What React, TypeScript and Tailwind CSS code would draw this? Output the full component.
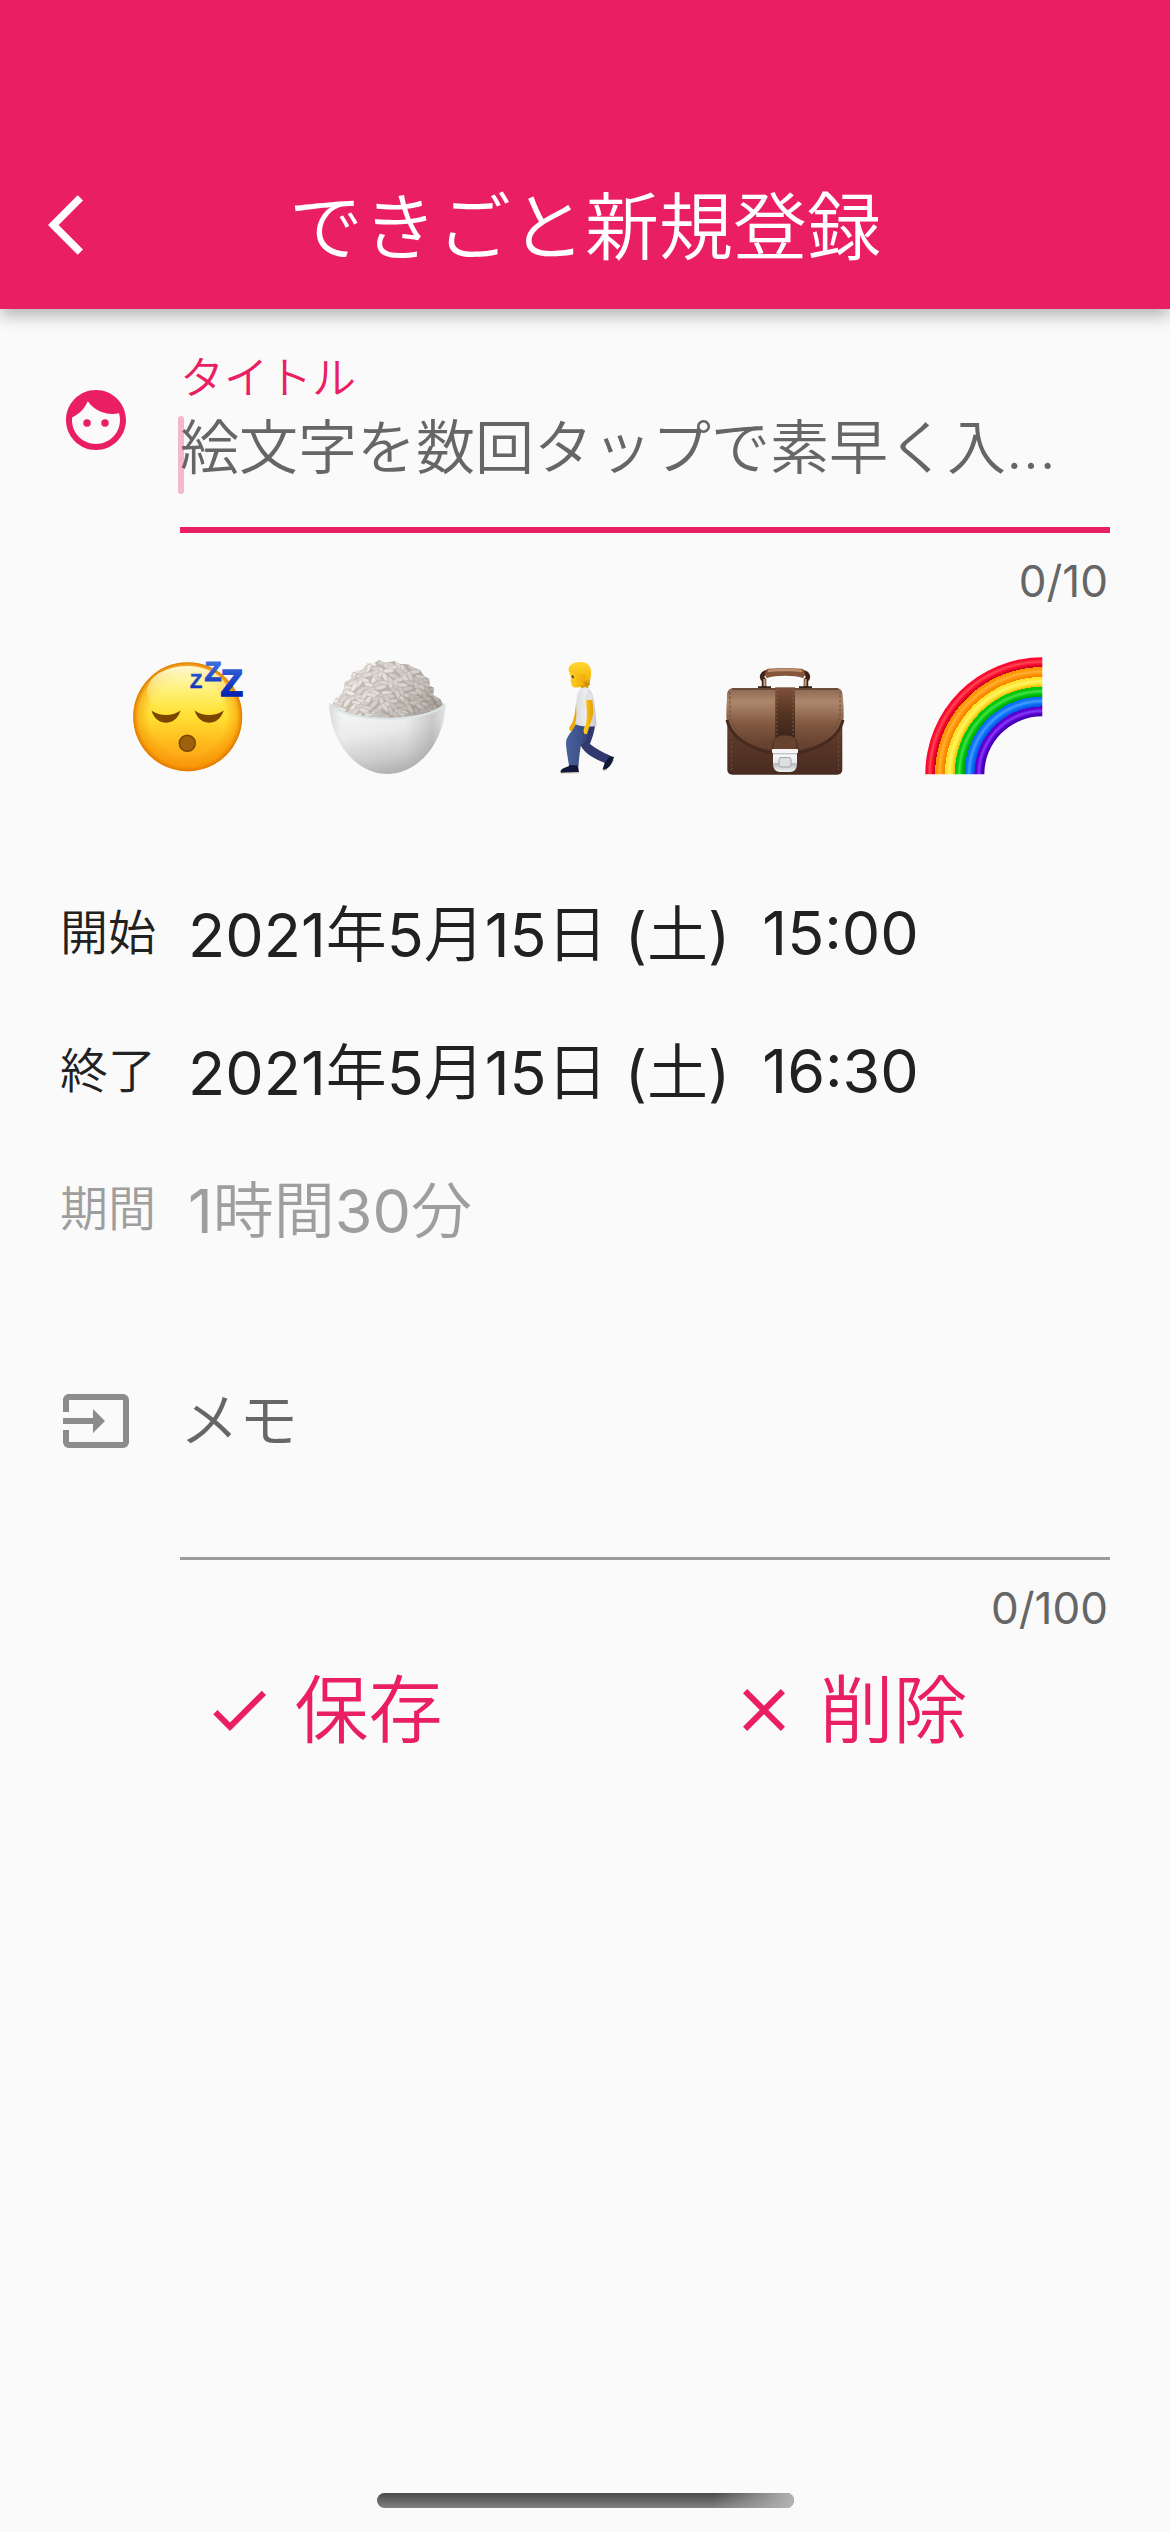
import { ReactNode, useState } from 'react';
import { MdCheck, MdClose, MdFace, MdInput } from 'react-icons/md';

const TITLE_MAX = 10;
const MEMO_MAX = 100;

function SleepingIcon() {
  return (
    <svg viewBox="0 0 120 120" className="size-[120px] overflow-visible" aria-hidden="true">
      <defs>
        <radialGradient id="sleep-edge" cx="0.5" cy="0.5" r="0.5">
          <stop offset="0.7" stopColor="#f08c00" stopOpacity="0" />
          <stop offset="0.9" stopColor="#f59300" stopOpacity="0.5" />
          <stop offset="1" stopColor="#e07800" />
        </radialGradient>
        <linearGradient id="sleep-face" x1="0" y1="0" x2="0" y2="1">
          <stop offset="0" stopColor="#fff37a" />
          <stop offset="0.5" stopColor="#ffe033" />
          <stop offset="0.75" stopColor="#ffb81c" />
          <stop offset="1" stopColor="#fb9a10" />
        </linearGradient>
        <linearGradient id="sleep-shine" x1="0" y1="0" x2="0" y2="1">
          <stop offset="0" stopColor="#fffde0" stopOpacity="0.95" />
          <stop offset="1" stopColor="#fff25a" stopOpacity="0" />
        </linearGradient>
        <linearGradient id="sleep-z" gradientUnits="userSpaceOnUse" x1="0" y1="4" x2="0" y2="38">
          <stop offset="0" stopColor="#3f70e0" />
          <stop offset="1" stopColor="#0524b0" />
        </linearGradient>
      </defs>
      <circle cx="60.7" cy="59.7" r="54.5" fill="url(#sleep-face)" />
      <circle cx="60.7" cy="59.7" r="54.5" fill="url(#sleep-edge)" />
      <ellipse cx="60" cy="34" rx="40" ry="25" fill="url(#sleep-shine)" />
      <path d="M24.5 53.5C33 59.500 45 59.500 53.500 53.500C51 62 45 65.800 39 65.800S27 62 24.500 53.500Z" fill="#7c4600" />
      <path d="M67.700 53.500C76 59.500 88 59.500 96.700 53.500C94 62 88 65.800 82.200 65.800S70 62 67.700 53.500Z" fill="#7c4600" />
      <circle cx="60.300" cy="86.300" r="8" fill="#9d600b" stroke="#7c4600" strokeWidth="1.500" />
      <g fontFamily="Liberation Sans, sans-serif" fontWeight="700" fill="url(#sleep-z)" stroke="url(#sleep-z)">
        <text x="63" y="30.500" fontSize="20" strokeWidth="0.600">Z</text>
        <text x="77.500" y="23.500" fontSize="28" strokeWidth="1">Z</text>
        <text x="93.500" y="39" fontSize="37" strokeWidth="1.400">Z</text>
      </g>
    </svg>
  );
}

// Grain positions are laid on a jittered lattice so every render is the same
const grains = Array.from({ length: 15 }, (_, row) =>
  Array.from({ length: 14 }, (_, col) => {
    const n = row * 14 + col;
    return {
      x: 4 + col * 8.6 + (row % 2) * 4.3 + Math.sin(n * 2.3) * 1.8,
      y: 7 + row * 4 + Math.cos(n * 1.7) * 1.3,
      angle: Math.sin(n * 4.1) * 40 + (col < 6 ? -18 : 28),
      fill: ['#e6e2db', '#ddd8d1', '#d6d1c9', '#ebe7e3'][(n * 7 + row) % 4],
    };
  }),
).flat();

function RiceIcon() {
  return (
    <svg viewBox="0 0 120 120" className="size-[120px] overflow-visible" aria-hidden="true">
      <defs>
        <clipPath id="rice-mound">
          <path d="M6 49L9 42L15 38L18 32L19 25L25 22L26 16L32 13L36 13L42 6L47 7L53 3L60 6L68 4L74 7L81 7L88 11L94 13L98 19L103 22L104 29L108 31L107 38L114 42L118 49C104 66 20 66 6 49Z" />
        </clipPath>
        <linearGradient id="rice-shade" x1="0" y1="0" x2="1" y2="0.4">
          <stop offset="0.3" stopColor="#fff" stopOpacity="0.15" />
          <stop offset="1" stopColor="#5f5550" stopOpacity="0.36" />
        </linearGradient>
        <linearGradient id="rice-bowl" x1="0.1" y1="0" x2="0.4" y2="1">
          <stop offset="0" stopColor="#f7f8f8" />
          <stop offset="0.45" stopColor="#ececec" />
          <stop offset="0.8" stopColor="#cdcdcd" />
          <stop offset="1" stopColor="#b4b4b4" />
        </linearGradient>
        <linearGradient id="rice-side" x1="0" y1="0" x2="1" y2="0">
          <stop offset="0" stopColor="#9a9a9a" stopOpacity="0.35" />
          <stop offset="0.15" stopColor="#fff" stopOpacity="0" />
          <stop offset="0.65" stopColor="#888" stopOpacity="0.02" />
          <stop offset="0.88" stopColor="#777" stopOpacity="0.3" />
          <stop offset="1" stopColor="#ddd" stopOpacity="0.4" />
        </linearGradient>
      </defs>
      <g clipPath="url(#rice-mound)">
        <rect width="122" height="66" fill="#b8b1a7" />
        {grains.map(({ x, y, angle, fill }, i) => (
          <ellipse key={i} cx={x} cy={y} rx="5.6" ry="2.3" fill={fill} stroke="#b5aea4" strokeWidth="0.5"
            transform={`rotate(${angle} ${x} ${y})`} />
        ))}
        <rect width="122" height="66" fill="url(#rice-shade)" />
      </g>
      <path d="M3.300 46C4 85 30 117 61.300 117S119 85 119.700 46C103 66 20 66 3.300 46Z" fill="url(#rice-bowl)" />
      <path d="M3.300 46C4 85 30 117 61.300 117S119 85 119.700 46C103 66 20 66 3.300 46Z" fill="url(#rice-side)" />
      <path d="M4 47C20 66.500 103 66.500 119 47" fill="none" stroke="#dbe5e6" strokeWidth="2" />
    </svg>
  );
}

function WalkingIcon() {
  return (
    <svg viewBox="0 0 120 120" className="size-[120px] overflow-visible" aria-hidden="true">
      <defs>
        <linearGradient id="walk-hair" x1="0" y1="0" x2="0" y2="1">
          <stop offset="0" stopColor="#ffd633" />
          <stop offset="0.7" stopColor="#f7b90d" />
          <stop offset="1" stopColor="#c98300" />
        </linearGradient>
        <linearGradient id="walk-skin" x1="0" y1="0" x2="1" y2="0">
          <stop offset="0" stopColor="#ffcf22" />
          <stop offset="1" stopColor="#e79e00" />
        </linearGradient>
        <linearGradient id="walk-shirt" x1="0" y1="0" x2="1" y2="0">
          <stop offset="0" stopColor="#d9dadd" />
          <stop offset="0.5" stopColor="#ededf0" />
          <stop offset="1" stopColor="#c5c5ca" />
        </linearGradient>
        <linearGradient id="walk-jeans" x1="0" y1="0" x2="1" y2="0">
          <stop offset="0" stopColor="#4a619c" />
          <stop offset="0.6" stopColor="#3d5088" />
          <stop offset="1" stopColor="#2c3063" />
        </linearGradient>
      </defs>
      <path d="M51 47C50 54 50 60 47 66L44 71L45 74L50 73L53 66L56 54Z" fill="#eaa90c" />
      <path d="M55 68L70 69C69 77 66 84 65 87C70 91 79 96 86 99L80 106C70 102 59 96 56 89C53 84 54 75 55 68Z" fill="#32396f" />
      <path d="M85 99L89 100C89 105 85 110 81 113C79 114 77 113 78 111L80 105Z" fill="#101a38" />
      <path d="M78 113C82 114 88 107 89 101" fill="none" stroke="#e8e2cf" strokeWidth="0.900" />
      <path d="M51 67L67 68C67 77 61 84 56 88C55 93 54 101 53.500 109L44 109C43 101 41 92 41 86C41 79 48 74 51 67Z" fill="url(#walk-jeans)" />
      <path d="M44 108L53 108.500L54 115.500L36 116C34.500 113 37 111.500 44 109Z" fill="#101a38" />
      <path d="M35.500 116.500L53.800 116" stroke="#e8e2cf" strokeWidth="1.400" />
      <path d="M54 25L64 25L63 33L57 33Z" fill="#dc9c08" />
      <path d="M45 14C44 18 47 20 45.500 24L47 29C49 31 53 31 57 29L64 23L65 14L55 8Z" fill="url(#walk-skin)" />
      <path d="M44 15C42 8 48 5 56 5C64 5 67 11 66 18C66 22 64 24 65 28C62 29 60 28 59 26L57 23L56 17C52 16 49 16 44 15Z" fill="url(#walk-hair)" />
      <ellipse cx="58.500" cy="20.500" rx="2" ry="3.500" fill="#f0af12" />
      <path d="M47 18.500L48.500 21" stroke="#4b4030" strokeWidth="1.700" />
      <path d="M57 31C61 29 65 31 67 36C69 41 71 55 71.500 69C65 70 56 70 50 67C53 58 50 50 52 40C53 35 54 32 57 31Z" fill="url(#walk-shirt)" />
      <path d="M61 42L67 42C68 49 69 56 67 62L64 71L62 77C59 78 58 75 59 71L61 67L62 58Z" fill="url(#walk-skin)" />
      <path d="M60 43C60 36 65 34 67 38L68 43Z" fill="#e2e2e6" />
    </svg>
  );
}

function BriefcaseIcon() {
  return (
    <svg viewBox="0 0 120 120" className="size-[120px] overflow-visible" aria-hidden="true">
      <defs>
        <linearGradient id="case-body" x1="0" y1="0" x2="0" y2="1">
          <stop offset="0" stopColor="#7a5542" />
          <stop offset="0.6" stopColor="#593828" />
          <stop offset="1" stopColor="#482b20" />
        </linearGradient>
        <linearGradient id="case-flap" x1="0" y1="0" x2="0" y2="1">
          <stop offset="0" stopColor="#8d6953" />
          <stop offset="0.2" stopColor="#ad876b" />
          <stop offset="0.55" stopColor="#80573f" />
          <stop offset="1" stopColor="#5a3728" />
        </linearGradient>
        <linearGradient id="case-strap" x1="0" y1="0" x2="0" y2="1">
          <stop offset="0" stopColor="#815039" />
          <stop offset="0.5" stopColor="#563523" />
          <stop offset="1" stopColor="#3b2519" />
        </linearGradient>
        <linearGradient id="case-lock" x1="0" y1="0" x2="0" y2="1">
          <stop offset="0" stopColor="#fff" />
          <stop offset="0.55" stopColor="#e8e9ec" />
          <stop offset="0.6" stopColor="#b8babd" />
          <stop offset="1" stopColor="#f3f3f5" />
        </linearGradient>
      </defs>
      <path d="M44 15C37 16 37 21 40 23V30M78 15C85 16 85 21 82 23V30" fill="none" stroke="#3f2417" strokeWidth="4.500" />
      <path d="M40.500 22V29M81.500 22V29" stroke="#c9a58a" strokeWidth="2" />
      <path d="M34 30.500H47M75 30.500H88" stroke="#38231a" strokeWidth="2.500" />
      <path d="M43 12C49 11 73 11 79 12C82 15 81 19 79 21C70 18 52 18 43 21C40 19 41 15 43 12Z" fill="#85563b" />
      <path d="M44 14C52 12.500 70 12.500 78 14" fill="none" stroke="#bd9070" strokeWidth="2.500" />
      <rect x="3.300" y="31.500" width="115" height="86.200" rx="5" fill="url(#case-body)" />
      <path d="M7.500 66V113M114.500 66V113" stroke="#6d4c3e" strokeWidth="0.900" strokeDasharray="2.500 2" />
      <path d="M8 31.500H114C119 31.500 119.700 45 119.700 60C118 83 87 98 61 98S4 83 2.300 60C2.300 45 3 31.500 8 31.500Z" fill="url(#case-flap)" />
      <path d="M3 63C8 84 35 96.500 61 96.500S114 84 119 63" fill="none" stroke="#452a1f" strokeWidth="3" />
      <path d="M6 35V58C9 79 35 92 61 92S113 79 116 58V35" fill="none" stroke="#6c4938" strokeWidth="1" strokeDasharray="2.500 2" />
      <path d="M8 32H114" stroke="#5d3c2c" strokeWidth="1.600" />
      <rect x="51.300" y="30.300" width="19.700" height="50" fill="url(#case-strap)" />
      <path d="M53 32V80M69 32V80" stroke="#8a654f" strokeWidth="0.800" strokeDasharray="2 2" />
      <path d="M49 96V87C49 81 54 78 61 78S73 81 73 87V96Z" fill="#67422f" stroke="#4c2d20" />
      <path d="M49 94H73V107C73 112 70 115 66 115H56C52 115 49 112 49 107Z" fill="url(#case-lock)" />
      <rect x="48" y="92" width="26" height="4.300" rx="1" fill="#f6f6f8" />
      <path d="M49 96.800H73" stroke="#aaa" />
      <rect x="55" y="100.500" width="12" height="9.500" rx="2" fill="#dddee1" stroke="#a6a7ab" />
    </svg>
  );
}

const bands = [
  ['#3b00a0', '#8a3cf5', '#5a00d6'],
  ['#0455d8', '#489cff', '#0a72ff'],
  ['#009a08', '#48e048', '#00c60c'],
  ['#e8b80c', '#fff36a', '#ffe52e'],
  ['#f57c00', '#ffb03a', '#ff9500'],
  ['#c4001c', '#ff4a52', '#fa0a30'],
];

function RainbowIcon() {
  const inner = 58;
  const outer = 117;
  const step = (outer - inner) / bands.length;
  const at = (r: number) => r / outer;
  return (
    <svg viewBox="0 0 120 120" className="size-[120px] overflow-visible" aria-hidden="true">
      <defs>
        <radialGradient id="rainbow" gradientUnits="userSpaceOnUse" cx="119.300" cy="117.300" r={outer}>
          {bands.map(([dark, light, base], i) => {
            const r = inner + i * step;
            return [
              <stop key={`${i}a`} offset={at(r)} stopColor={dark} />,
              <stop key={`${i}b`} offset={at(r + step * 0.3)} stopColor={base} />,
              <stop key={`${i}c`} offset={at(r + step * 0.55)} stopColor={light} />,
              <stop key={`${i}d`} offset={at(r + step * 0.8)} stopColor={base} />,
              <stop key={`${i}e`} offset={at(r + step)} stopColor={base} />,
            ];
          })}
        </radialGradient>
      </defs>
      <path d="M2.300 117.300A117 117 0 0 1 119.300 0.300V59.300A58 58 0 0 0 61.300 117.300Z" fill="url(#rainbow)" />
    </svg>
  );
}

const shortcuts = [
  { label: '睡眠', icon: SleepingIcon },
  { label: '食事', icon: RiceIcon },
  { label: '移動', icon: WalkingIcon },
  { label: '仕事', icon: BriefcaseIcon },
  { label: '余暇', icon: RainbowIcon },
];

const times = [
  { label: '開始', date: '2021年5月15日 (土)', time: '15:00' },
  { label: '終了', date: '2021年5月15日 (土)', time: '16:30' },
];

function Field({ icon, count, children }: { icon: ReactNode; count: string; children: ReactNode }) {
  return (
    <div className="flex gap-12">
      {icon}
      <div className="min-w-0 flex-1">
        {children}
        <p className="mt-[22px] pr-0.5 text-right text-[44px] leading-[52px] text-[#666]">{count}</p>
      </div>
    </div>
  );
}

export default function App() {
  const [title, setTitle] = useState('');
  const [memo, setMemo] = useState('');

  return (
    <div className="flex min-h-screen flex-col bg-[#fafafa] font-['Inter','Noto_Sans_CJK_JP_DemiLight','Noto_Sans_CJK_JP',sans-serif] text-[#212121]" lang="ja">
      {/* App bar */}
      <header className="bg-[#e91e63] pt-[141px] text-white shadow-[0_6px_16px_rgba(0,0,0,0.3)]">
        <div className="grid h-[168px] grid-cols-[1fr_auto_1fr] items-center px-12">
          <button type="button" aria-label="戻る" className="size-[72px]">
            <svg viewBox="0 0 24 24" className="size-full" fill="currentColor">
              <path d="M11.670 3.870L9.900 2.100 0 12l9.900 9.900 1.770-1.770L3.540 12z" />
            </svg>
          </button>
          <h1 className="pt-1 text-[74px] leading-[96px] font-[350]">できごと新規登録</h1>
        </div>
      </header>

      <main className="px-[60px] pt-[43px]">
        <Field icon={<MdFace className="mt-8 size-[72px] text-[#e91e63]" />} count={`${title.length}/${TITLE_MAX}`}>
          <label htmlFor="title" className="block text-[44px] leading-[52px] font-[350] text-[#e91e63]">タイトル</label>
          <div className="relative mt-3 border-b-6 border-[#e91e63] pb-[47px]">
            <input id="title" type="text" value={title} maxLength={TITLE_MAX}
              onChange={e => setTitle(e.target.value)}
              placeholder="絵文字を数回タップで素早く入…"
              className="block h-16 w-full text-[59px] leading-[64px] font-[350] caret-[#e91e63] outline-none placeholder:text-[#666] placeholder:opacity-100" />
            {/* Resting caret */}
            {!title && <span className="absolute top-0 -left-0.5 h-[78px] w-1.5 rounded-full bg-[#e91e63]/30" />}
          </div>
        </Field>

        {/* Emoji shortcuts */}
        <div className="mx-7 mt-[50px] grid grid-cols-5">
          {shortcuts.map(({ label, icon: Icon }) => (
            <button key={label} type="button" aria-label={label} className="flex justify-center">
              <Icon />
            </button>
          ))}
        </div>

        <div className="mt-[89px]">
          {times.map(({ label, date, time }) => (
            <div key={label} className="flex h-[138px] items-center gap-8">
              <span className="pb-1 text-[48px] leading-[64px] font-[350]">{label}</span>
              <button type="button" className="text-[61px] leading-[72px]">{date}</button>
              <button type="button" className="pb-1 text-[61px] leading-[72px]">{time}</button>
            </div>
          ))}
          <div className="flex h-[138px] items-center gap-8 text-[#9e9e9e]">
            <span className="pb-1 text-[48px] leading-[64px] font-[350]">期間</span>
            <output className="text-[61px] leading-[72px]">1時間30分</output>
          </div>
        </div>

        <div className="mt-[105px]">
          <Field icon={<MdInput className="size-[72px] text-[#8c8c8c]" />} count={`${memo.length}/${MEMO_MAX}`}>
            <div className="border-b-3 border-[#9b9b9b] pb-[3px]">
              <textarea aria-label="メモ" rows={1} value={memo} maxLength={MEMO_MAX}
                onChange={e => setMemo(e.target.value)}
                placeholder="メモ"
                className="block h-[169px] w-full resize-none text-[59px] leading-[72px] font-[350] caret-[#e91e63] outline-none placeholder:text-[#666] placeholder:opacity-100" />
            </div>
          </Field>
        </div>

        <div className="mt-7 grid grid-cols-2 text-[#e91e63]">
          <button type="button" className="flex items-center justify-center gap-5 text-[74px] leading-[96px] font-[350]">
            <MdCheck className="size-[72px]" />
            保存
          </button>
          <button type="button" className="flex items-center justify-center gap-5 text-[74px] leading-[96px] font-[350]">
            <MdClose className="size-[72px]" />
            削除
          </button>
        </div>
      </main>

      {/* Home indicator */}
      <footer className="mt-auto flex justify-center pb-6">
        <div className="h-[15px] w-[417px] overflow-hidden rounded-full bg-linear-to-b from-[#4a4a4a] to-[#828282]">
          <div className="ml-auto h-full w-20 bg-linear-to-r from-transparent to-[#b4b4b4]" />
        </div>
      </footer>
    </div>
  );
}
